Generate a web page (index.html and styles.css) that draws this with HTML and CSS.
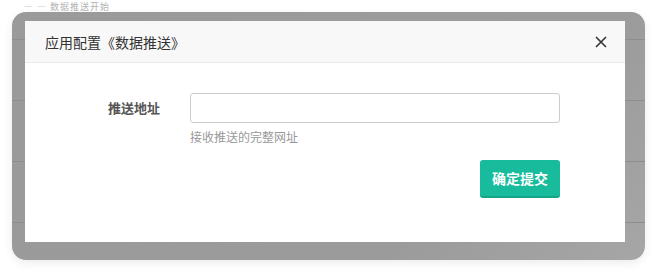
FILE: index.html
```html
<!DOCTYPE html>
<html lang="zh-CN">
<head>
<meta charset="utf-8">
<title>应用配置</title>
<link rel="stylesheet" href="styles.css">
</head>
<body>
<div class="page">
  <div class="peek">— — 数据推送开始</div>
  <div class="backdrop">
    <div class="rows">
      <div class="row row-first"></div>
      <div class="row"></div>
      <div class="row"></div>
      <div class="row"></div>
    </div>
    <div class="modal">
      <div class="modal-header">
        <span class="modal-title">应用配置《数据推送》</span>
        <button class="close" aria-label="关闭">
          <svg width="12" height="12" viewBox="0 0 12 12"><path d="M1 1L11 11M11 1L1 11" stroke="#333" stroke-width="1.6" fill="none"/></svg>
        </button>
      </div>
      <div class="modal-body">
        <div class="form-row">
          <label class="form-label">推送地址</label>
          <div class="form-field">
            <input class="form-input" type="text">
            <div class="help">接收推送的完整网址</div>
          </div>
        </div>
        <div class="actions">
          <button class="btn-submit">确定提交</button>
        </div>
      </div>
    </div>
  </div>
</div>
</body>
</html>
```
FILE: styles.css
```css
* { box-sizing: border-box; }
html, body { margin: 0; padding: 0; background: #fff; }
body { font-family: "Noto Sans CJK SC", "Noto Sans", sans-serif; width: 657px; height: 272px; overflow: hidden; }
.page { position: relative; padding: 12px 12px 0 12px; }
.peek {
  position: absolute; left: 24px; top: 2px;
  font-size: 9px; line-height: 10px; color: #b4b4b4; letter-spacing: 1px;
}
.backdrop {
  position: relative;
  width: 633px; height: 248px;
  background: linear-gradient(135deg, #9a9a9a 0%, #9b9b9b 70%, #a6a6a6 100%);
  border-radius: 14px;
  box-shadow: 0 3px 10px rgba(0,0,0,0.08);
  overflow: hidden;
}
.rows { display: flex; flex-direction: column; }
.row { height: 61px; border-bottom: 1px solid #8d8d8d; }
.row-first { height: 28px; }
.modal {
  position: absolute; left: 13px; top: 9px;
  width: 600px; height: 221px;
  background: #fff;
}
.modal-header {
  height: 42px;
  background: #f8f8f8;
  border-bottom: 1px solid #ebebeb;
  display: flex; align-items: center; justify-content: space-between;
  padding: 0 18px 0 20px;
}
.modal-title { font-size: 14px; color: #333; }
.close { border: 0; background: none; padding: 0; width: 12px; height: 12px; display: flex; cursor: pointer; }
.modal-body { padding: 30px 65px 0 0; }
.form-row { display: flex; align-items: flex-start; }
.form-label {
  width: 135px; text-align: right; font-size: 13px; font-weight: bold; color: #555;
  line-height: 30px;
}
.form-field { margin-left: 30px; flex: 1; }
.form-input {
  display: block; width: 370px; height: 30px;
  border: 1px solid #ccc; border-radius: 3px; background: #fff; outline: none;
}
.help { font-size: 12px; color: #999; margin-top: 5px; line-height: 17px; }
.actions { display: flex; justify-content: flex-end; margin-top: 15px; }
.btn-submit {
  width: 80px; height: 38px;
  background: #18bc9c; color: #fff;
  border: 0; border-bottom: 2px solid #14a589; border-radius: 3px;
  font-family: inherit; font-size: 14px; font-weight: bold; cursor: pointer;
  padding: 0;
}
```
